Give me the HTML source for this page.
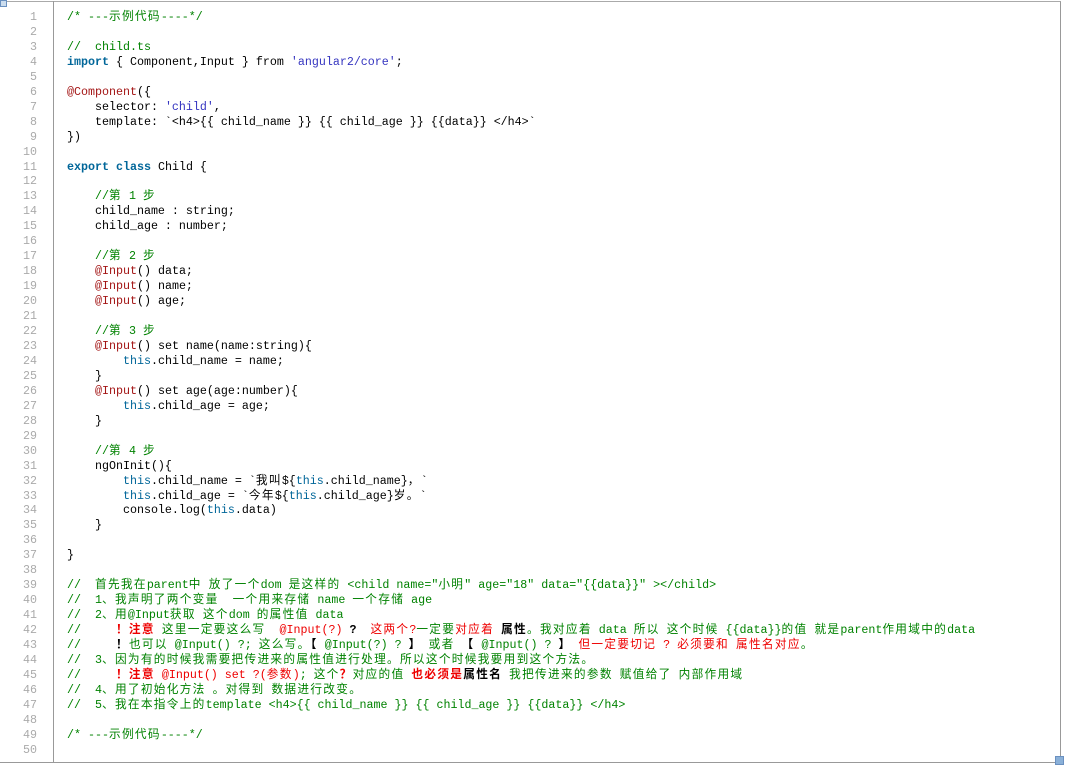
<!DOCTYPE html>
<html><head><meta charset="utf-8"><style>
html,body{margin:0;padding:0;background:#fff;width:1067px;height:767px;overflow:hidden}
.box{position:absolute;left:0;top:1px;width:1060px;height:760px;border:1px solid #999;border-left:none;border-top:1px solid #aaa}
.gut{position:absolute;left:53px;top:1px;height:761px;border-left:1px solid #999}
.ln,.code{position:absolute;top:10px;margin:0;font:11.67px/14.95px "Liberation Mono","Noto Sans CJK SC",monospace;white-space:pre}
.ln{left:0;width:37px;text-align:right;color:#aaa}
.code{left:67px;color:#000}
z{letter-spacing:1.3px}
.c{color:#008200}.k{color:#069;font-weight:bold}.s{color:#3535c0}.d{color:#a31515}.t{color:#069}
.r{color:#e00}.rb{color:#e00;font-weight:bold}.b{color:#000;font-weight:bold}
.rs{position:absolute;left:1055px;top:756px;width:7px;height:7px;background:#8ab0d8;border:1px solid #6a90c0}
.tl{position:absolute;left:0;top:0;width:5px;height:5px;border:1px solid #6a90c0;background:#cde}
</style></head><body>
<div class="box"></div><div class="gut"></div><div class="tl"></div><div class="rs"></div>
<pre class="ln">1
2
3
4
5
6
7
8
9
10
11
12
13
14
15
16
17
18
19
20
21
22
23
24
25
26
27
28
29
30
31
32
33
34
35
36
37
38
39
40
41
42
43
44
45
46
47
48
49
50</pre>
<pre class="code"><span class="c">/* ---<z>示例代码</z>----*/</span>

<span class="c">//  child.ts</span>
<span class="k">import</span> { Component,Input } from <span class="s">'angular2/core'</span>;

<span class="d">@Component</span>({
    selector: <span class="s">'child'</span>,
    template: `&lt;h4&gt;{{ child_name }} {{ child_age }} {{data}} &lt;/h4&gt;`
})

<span class="k">export</span> <span class="k">class</span> Child {

    <span class="c">//<z>第</z> 1 <z>步</z></span>
    child_name : string;
    child_age : number;

    <span class="c">//<z>第</z> 2 <z>步</z></span>
    <span class="d">@Input</span>() data;
    <span class="d">@Input</span>() name;
    <span class="d">@Input</span>() age;

    <span class="c">//<z>第</z> 3 <z>步</z></span>
    <span class="d">@Input</span>() set name(name:string){
        <span class="t">this</span>.child_name = name;
    }
    <span class="d">@Input</span>() set age(age:number){
        <span class="t">this</span>.child_age = age;
    }

    <span class="c">//<z>第</z> 4 <z>步</z></span>
    ngOnInit(){
        <span class="t">this</span>.child_name = `<z>我叫</z>${<span class="t">this</span>.child_name}<z>，</z>`
        <span class="t">this</span>.child_age = `<z>今年</z>${<span class="t">this</span>.child_age}<z>岁。</z>`
        console.log(<span class="t">this</span>.data)
    }

}

<span class="c">//  <z>首先我在</z>parent<z>中</z> <z>放了一个</z>dom <z>是这样的</z> &lt;child name="<z>小明</z>" age="18" data="{{data}}" &gt;&lt;/child&gt;</span>
<span class="c">//  1<z>、我声明了两个变量</z>  <z>一个用来存储</z> name <z>一个存储</z> age</span>
<span class="c">//  2<z>、用</z>@Input<z>获取</z> <z>这个</z>dom <z>的属性值</z> data</span>
<span class="c">//     </span><span class="rb"><z>！注意</z></span> <span class="c"><z>这里一定要这么写</z> </span> <span class="r">@Input(?)</span> <span class="b">?</span>  <span class="r"><z>这两个</z>?</span><span class="c"><z>一定要</z></span><span class="r"><z>对应着</z></span> <span class="b"><z>属性</z></span><span class="c"><z>。我对应着</z> data <z>所以</z> <z>这个时候</z> {{data}}<z>的值</z> <z>就是</z>parent<z>作用域中的</z>data</span>
<span class="c">//     </span><span class="b"><z>！</z></span><span class="c"><z>也可以</z> @Input() ?; <z>这么写。</z></span><span class="b"><z>【</z></span> <span class="c">@Input(?) ?</span> <span class="b"><z>】</z></span> <span class="c"><z>或者</z></span> <span class="b"><z>【</z></span> <span class="c">@Input() ?</span> <span class="b"><z>】</z></span> <span class="r"><z>但一定要切记</z> ? <z>必须要和</z> <z>属性名对应</z></span><span class="c"><z>。</z></span>
<span class="c">//  3<z>、因为有的时候我需要把传进来的属性值进行处理。所以这个时候我要用到这个方法。</z></span>
<span class="c">//     </span><span class="rb"><z>！注意</z></span> <span class="r">@Input() set ?(<z>参数</z>)</span><span class="c">; <z>这个</z></span><span class="rb"><z>？</z></span><span class="c"><z>对应的值</z> </span><span class="rb"><z>也必须是</z></span><span class="b"><z>属性名</z></span> <span class="c"><z>我把传进来的参数</z> <z>赋值给了</z> <z>内部作用域</z></span>
<span class="c">//  4<z>、用了初始化方法</z> <z>。对得到</z> <z>数据进行改变。</z></span>
<span class="c">//  5<z>、我在本指令上的</z>template &lt;h4&gt;{{ child_name }} {{ child_age }} {{data}} &lt;/h4&gt;</span>

<span class="c">/* ---<z>示例代码</z>----*/</span></pre>
</body></html>
